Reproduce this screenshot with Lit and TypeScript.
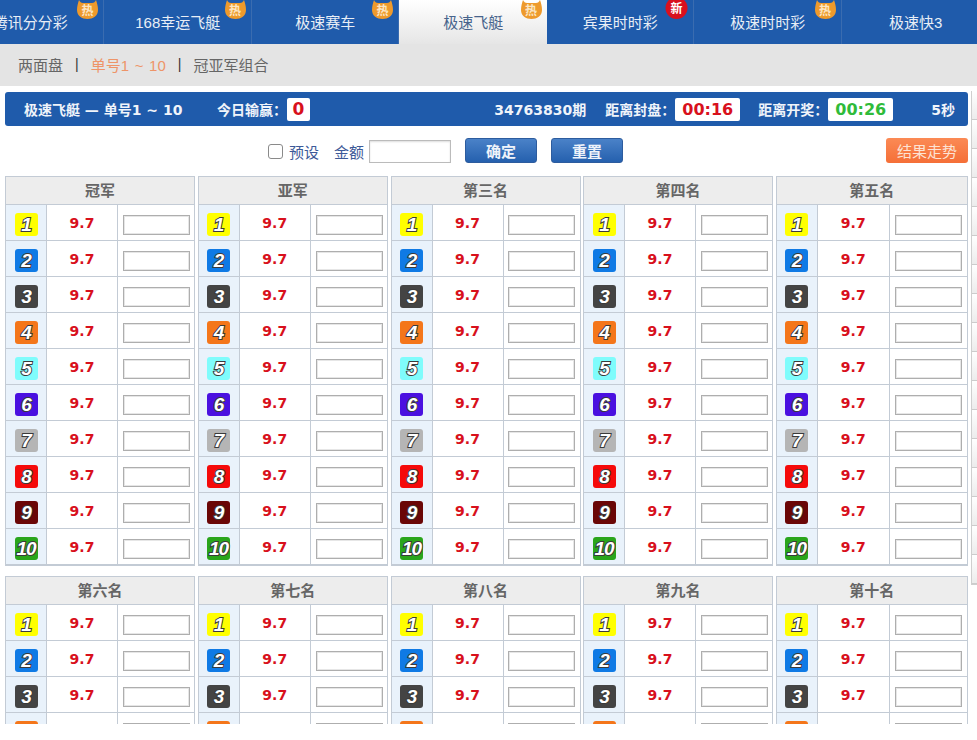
import { LitElement, html, css, svg } from "lit";
import { customElement } from "lit/decorators.js";

const TABS: { label: string; badge?: string; active?: boolean }[] = [
  { label: "腾讯分分彩", badge: "热" },
  { label: "168幸运飞艇", badge: "热" },
  { label: "极速赛车", badge: "热" },
  { label: "极速飞艇", badge: "热", active: true },
  { label: "宾果时时彩", badge: "新" },
  { label: "极速时时彩", badge: "热" },
  { label: "极速快3" },
];
const GROUP_A = ["冠军", "亚军", "第三名", "第四名", "第五名"];
const GROUP_B = ["第六名", "第七名", "第八名", "第九名", "第十名"];
const BALLS = ["#ffff00", "#0f7ae5", "#444444", "#f4761a", "#7ffcfc", "#4a10e0", "#b5b5b5", "#f50a0a", "#6a0606", "#2aa51c"];

const FLAME = svg`<path d="M1 10C1 6 2 3 3 0C4 2 5 3 7 3C10 3 13 3 16 3C18 3 19 2 20 0C21 3 22 6 22 10C22 16 17 19 11.5 19C6 19 1 16 1 10Z" fill="#ee9a2c"/>`;
const ROUND = svg`<circle cx="11.5" cy="8" r="11" fill="#d9101e"/>`;

@customElement("app-root")
export class AppRoot extends LitElement {
  static styles = css`
    :host { display: block; position: relative; width: 977px; height: 724px; overflow: hidden; background: #fff;
      font-family: "Liberation Sans", "Noto Sans CJK SC", sans-serif; font-size: 14px; color: #555; }
    .tabs { display: flex; height: 44px; margin-left: -43.5px; width: 1040px; background: #1f5bab; }
    .tab { position: relative; width: 147.5px; flex: none; display: flex; align-items: center; justify-content: center;
      color: #e8eef6; font-size: 15px; box-sizing: border-box; border-right: 1px solid #3a6cb0; padding: 0 0 1px 1px; }
    .tab.active { background: linear-gradient(#fff, #e6e6e6); color: #48648c; border-right: none; }
    .tab:last-child { border-right: none; }
    .badge { position: absolute; top: 0; right: 4px; width: 23px; height: 19px; color: #fbe6c4; font-size: 12px; font-weight: bold;
      display: flex; align-items: center; justify-content: center; }
    .badge svg { position: absolute; inset: 0; width: 23px; height: 19px; overflow: visible; }
    .badge span { position: relative; }
    .badge.new { color: #fff; right: 5px; }
    .badge.new span { top: -2px; }
    .subnav { height: 42px; background: #e4e4e4; display: flex; align-items: center; padding: 0 18px 2px; gap: 12px; font-size: 15px; color: #666; box-sizing: border-box; }
    .subnav .on { color: #ee9468; word-spacing: 1.5px; }
    .subnav .sep { color: #333; font-size: 14px; }
    .bar { margin: 6px 9px 0 5px; height: 34px; background: #1f5bab; border-radius: 3px; display: flex; align-items: center; color: #f0f4fa;
      font-weight: bold; font-size: 14px; padding: 0 13px 0 19px; box-sizing: border-box; }
    .bar .title { width: 193px; }
    .bar .spacer { flex: 1; }
    .box { background: #fff; border-radius: 2px; height: 23px; display: inline-flex; align-items: center; justify-content: center;
      font-size: 17px; font-weight: bold; font-family: "DejaVu Sans", sans-serif; }
    .red { color: #d8101c; }
    .green { color: #2fbb3a; }
    .zero { width: 23px; }
    .time { width: 65px; font-size: 16px; }
    .num { font-family: "DejaVu Sans", "Noto Sans CJK SC", sans-serif; font-size: 14px; }
    .t1 { margin-left: 19px; }
    .t2 { margin-left: 18px; }
    .sec { margin-left: 38px; }
    .tools { display: flex; align-items: center; height: 50px; padding: 0 9px 0 268px; color: #3d5a98; font-size: 15px; }
    .tools .cb { width: 15px; height: 15px; border: 1px solid #8a8a8a; border-radius: 3px; box-sizing: border-box; background: #fff; margin: 0 6px 0 0; }
    .tools .amt { margin-left: 15px; }
    .tools .in { width: 82px; height: 23px; border: 1px solid #bbb; box-sizing: border-box; margin: 1px 0 0 5px; background: #fff; box-shadow: inset 0 1px 2px #ddd; }
    .btn { width: 72px; height: 25px; border-radius: 3px; background: linear-gradient(#4a82c8, #2560ae); color: #eef3fa; display: flex; align-items: center; justify-content: center; font-size: 15px; font-weight: bold; border: 1px solid #2d5c9e; box-sizing: border-box; margin: -1px 0 0 14px; }
    .btn.orange { width: 82px; margin-left: auto; background: linear-gradient(#fb8a55, #f56f37); border: none; color: #fde3d4; font-weight: normal; }
    .grid { display: grid; grid-template-columns: 190px 190.5px 190px 190px 192.5px; column-gap: 2.5px; padding-left: 5px; width: 966px; }
    .grid.second { margin-top: 10px; }
    .col { border: 1px solid #c3cbd5; box-sizing: border-box; border-bottom-width: 2px; }
    .head { height: 28px; background: #ededed; border-bottom: 1px solid #c3cbd5; box-sizing: border-box; display: flex; align-items: center; justify-content: center; font-weight: bold; color: #666; font-size: 15px; padding-bottom: 2px; }
    .row { display: flex; height: 36px; box-sizing: border-box; border-bottom: 1px solid #c3cbd5; }
    .row:last-child { border-bottom: none; height: 35px; }
    .idx { width: 41px; flex: none; background: #e9f2fb; border-right: 1px solid #c3cbd5; display: flex; align-items: center; justify-content: center; box-sizing: border-box; padding-top: 4px; }
    .ball { width: 23px; height: 23px; border-radius: 3px; display: flex; align-items: center; justify-content: center; color: #fff;
      font: italic bold 19px "Liberation Sans", sans-serif; -webkit-text-stroke: 2px #3a3a3a; paint-order: stroke fill; letter-spacing: -1px; }
    .odds { flex: 1; display: flex; align-items: center; justify-content: center; color: #d8101c; font-weight: bold; font-size: 14px; font-family: "DejaVu Sans", sans-serif; padding-top: 1px; box-sizing: border-box; }
    .cell { width: 77px; flex: none; border-left: 1px solid #c3cbd5; box-sizing: border-box; display: flex; align-items: center; justify-content: center; padding-top: 4px; }
    .col.wide .cell { width: 78px; }
    .field { width: 67px; height: 20px; border: 1px solid #aeaeae; box-sizing: border-box; background: #fff; box-shadow: inset 0 0 0 1px #e6e6e6; }
    .side { position: absolute; left: 971px; top: 91px; width: 6px; height: 494px; background: repeating-linear-gradient(#ffffff 0, #ececec 28px, #cccccc 28px, #cccccc 29px); border-left: 1px solid #cfcfcf; border-bottom: 1px solid #cfcfcf; box-sizing: border-box; }
  `;

  private col(name: string, rows: number, wide: boolean) {
    return html`<div class="col ${wide ? "wide" : ""}">
      <div class="head">${name}</div>
      ${BALLS.slice(0, rows).map((c, i) => html`<div class="row">
        <div class="idx"><div class="ball" style="background:${c}">${i + 1}</div></div>
        <div class="odds">9.7</div>
        <div class="cell"><div class="field"></div></div>
      </div>`)}
    </div>`;
  }

  render() {
    return html`
      <div class="tabs">
        ${TABS.map((t) => html`<div class="tab ${t.active ? "active" : ""}">${t.label}
          ${t.badge ? html`<div class="badge ${t.badge === "新" ? "new" : ""}"><svg viewBox="0 0 23 19">${t.badge === "新" ? ROUND : FLAME}</svg><span>${t.badge}</span></div>` : ""}</div>`)}
      </div>
      <div class="subnav"><span>两面盘</span><span class="sep">|</span><span class="on">单号1 ~ 10</span><span class="sep">|</span><span>冠亚军组合</span></div>
      <div class="bar">
        <span class="title num">极速飞艇 — 单号1 ~ 10</span>
        <span>今日输赢：</span><span class="box red zero">0</span>
        <span class="spacer"></span>
        <span class="num">34763830期</span>
        <span class="t1">距离封盘：</span><span class="box red time">00:16</span>
        <span class="t2">距离开奖：</span><span class="box green time">00:26</span>
        <span class="sec num">5秒</span>
      </div>
      <div class="tools">
        <div class="cb"></div><span>预设</span><span class="amt">金额</span><div class="in"></div>
        <div class="btn">确定</div><div class="btn">重置</div><div class="btn orange">结果走势</div>
      </div>
      <div class="grid">${GROUP_A.map((n, i) => this.col(n, 10, i === 4))}</div>
      <div class="grid second">${GROUP_B.map((n, i) => this.col(n, 4, i === 4))}</div>
      <div class="side"></div>
    `;
  }
}
